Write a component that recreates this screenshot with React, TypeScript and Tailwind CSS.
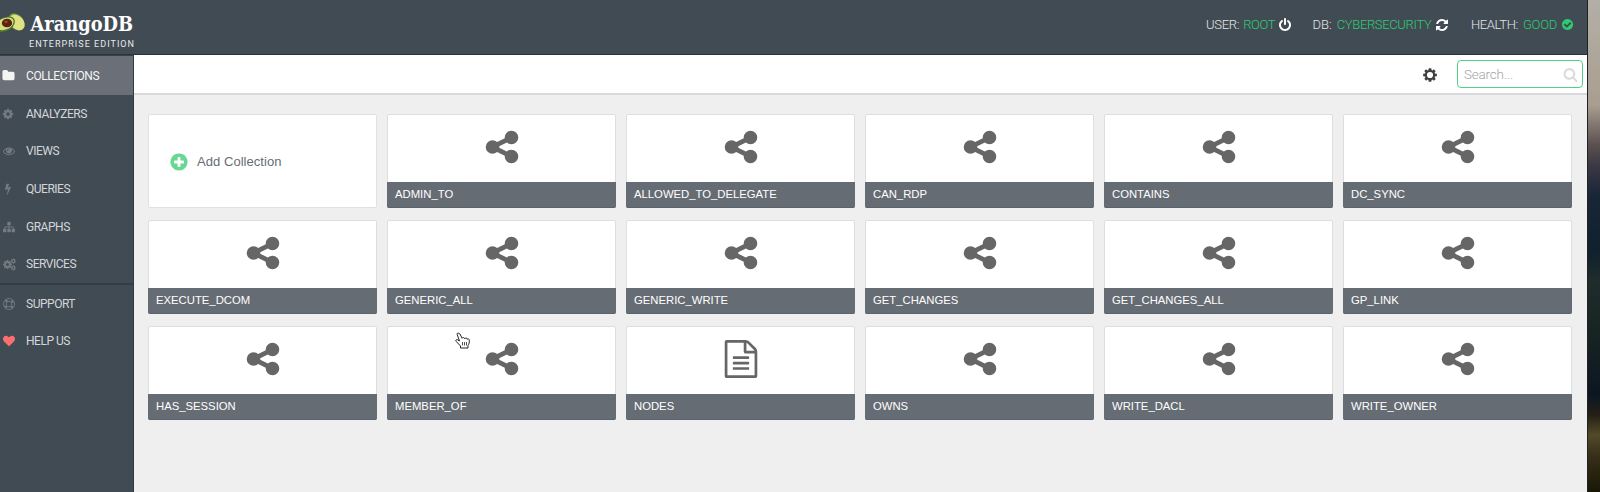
import React from "react";

const COG =
  "M1152 896q0-106-75-181t-181-75-181 75-75 181 75 181 181 75 181-75 75-181zm512-109v222q0 12-8 23t-20 13l-185 28q-19 54-39 91 35 50 107 138 10 12 10 25t-9 23q-27 37-99 108t-94 71q-12 0-26-9l-138-108q-44 23-91 38-16 136-29 186-7 28-36 28h-222q-14 0-24.5-8.5t-11.5-21.5l-28-184q-49-16-90-37l-141 107q-10 9-25 9-14 0-25-11-126-114-165-168-7-10-7-23 0-12 8-23 15-21 51-66.5t54-70.5q-27-50-41-99l-183-27q-13-2-21-12.5t-8-23.5v-222q0-12 8-23t19-13l186-28q14-46 39-92-40-57-107-138-10-12-10-24 0-10 9-23 26-36 98.5-107.5t94.5-71.5q13 0 26 10l138 107q44-23 91-38 16-136 29-186 7-28 36-28h222q14 0 24.5 8.5t11.5 21.5l28 184q49 16 90 37l142-107q9-9 24-9 13 0 25 10 129 119 165 170 7 8 7 22 0 12-8 23-15 21-51 66.5t-54 70.5q26 50 41 98l183 28q13 2 21 12.5t8 23.5z";

const PATHS = {
  cog: COG,
  share:
    "M1344 1024q133 0 226.5 93.5t93.5 226.5-93.5 226.5-226.5 93.5-226.5-93.5-93.5-226.5q0-12 2-34l-360-180q-92 86-218 86-133 0-226.5-93.5t-93.5-226.5 93.5-226.5 226.5-93.5q126 0 218 86l360-180q-2-22-2-34 0-133 93.5-226.5t226.5-93.5 226.5 93.5 93.5 226.5-93.5 226.5-226.5 93.5q-126 0-218-86l-360 180q2 22 2 34t-2 34l360 180q92-86 218-86z",
  file: "M1596 380q28 28 48 76t20 88v1152q0 40-28 68t-68 28h-1344q-40 0-68-28t-28-68v-1600q0-40 28-68t68-28h896q40 0 88 20t76 48zm-444-244v376h376q-10-29-22-41l-313-313q-12-12-41-22zm384 1528v-1024h-416q-40 0-68-28t-28-68v-416h-768v1536h1280zm-1024-864q0-14 9-23t23-9h704q14 0 23 9t9 23v64q0 14-9 23t-23 9h-704q-14 0-23-9t-9-23v-64zm736 224q14 0 23 9t9 23v64q0 14-9 23t-23 9h-704q-14 0-23-9t-9-23v-64q0-14 9-23t23-9h704zm0 256q14 0 23 9t9 23v64q0 14-9 23t-23 9h-704q-14 0-23-9t-9-23v-64q0-14 9-23t23-9h704z",
  plus: "M1344 960v-128q0-26-19-45t-45-19h-256v-256q0-26-19-45t-45-19h-128q-26 0-45 19t-19 45v256h-256q-26 0-45 19t-19 45v128q0 26 19 45t45 19h256v256q0 26 19 45t45 19h128q26 0 45-19t19-45v-256h256q26 0 45-19t19-45zm320-64q0 209-103 385.5t-279.5 279.5-385.5 103-385.5-103-279.5-279.5-103-385.5 103-385.5 279.5-279.5 385.5-103 385.5 103 279.5 279.5 103 385.5z",
  power:
    "M1664 896q0 156-61 298t-164 245-245 164-298 61-298-61-245-164-164-245-61-298q0-182 80.5-343t226.5-270q43-32 95.5-25t83.5 50q32 42 24.5 94.5t-49.5 84.5q-98 74-151.5 181t-53.5 228q0 104 40.5 198.5t109.5 163.5 163.5 109.5 198.5 40.5 198.5-40.5 163.5-109.5 109.5-163.5 40.5-198.5q0-121-53.5-228t-151.5-181q-42-32-49.5-84.5t24.5-94.5q31-43 84-50t95 25q146 109 226.5 270t80.5 343zm-640-768v640q0 52-38 90t-90 38-90-38-38-90v-640q0-52 38-90t90-38 90 38 38 90z",
  refresh:
    "M1639 1056q0 5-1 7-64 268-268 434.5t-478 166.5q-146 0-282.5-55t-243.5-157l-129 129q-19 19-45 19t-45-19-19-45v-448q0-26 19-45t45-19h448q26 0 45 19t19 45-19 45l-137 137q71 66 161 102t187 36q134 0 250-65t186-179q11-17 53-117 8-23 30-23h192q13 0 22.5 9.5t9.5 22.5zm25-800v448q0 26-19 45t-45 19h-448q-26 0-45-19t-19-45 19-45l138-138q-148-137-349-137-134 0-250 65t-186 179q-11 17-53 117-8 23-30 23h-199q-13 0-22.5-9.5t-9.5-22.5v-7q65-268 270-434.5t480-166.5q146 0 284 55.5t245 156.5l130-129q19-19 45-19t45 19 19 45z",
  check:
    "M1412 734q0-28-18-46l-91-90q-19-19-45-19t-45 19l-408 407-226-226q-19-19-45-19t-45 19l-91 90q-18 18-18 46 0 27 18 45l362 362q19 19 45 19 27 0 46-19l543-543q18-18 18-45zm252 162q0 209-103 385.5t-279.5 279.5-385.5 103-385.5-103-279.5-279.5-103-385.5 103-385.5 279.5-279.5 385.5-103 385.5 103 279.5 279.5 103 385.5z",
  search:
    "M1216 832q0-185-131.5-316.5t-316.5-131.5-316.5 131.5-131.5 316.5 131.5 316.5 316.5 131.5 316.5-131.5 131.5-316.5zm512 832q0 52-38 90t-90 38q-54 0-90-38l-343-342q-179 124-399 124-143 0-273.5-55.5t-225-150-150-225-55.5-273.5 55.5-273.5 150-225 225-150 273.5-55.5 273.5 55.5 225 150 150 225 55.5 273.5q0 220-124 399l343 343q37 37 37 90z",
  folder:
    "M1728 608v704q0 92-66 158t-158 66h-1216q-92 0-158-66t-66-158v-960q0-92 66-158t158-66h320q92 0 158 66t66 158v32h672q92 0 158 66t66 158z",
  eye: "M1664 960q-152-236-381-353 61 104 61 225 0 185-131.5 316.5t-316.5 131.5-316.5-131.5-131.5-316.5q0-121 61-225-229 117-381 353 133 205 333.5 326.5t434.5 121.5 434.5-121.5 333.5-326.5zm-720-384q0-20-14-34t-34-14q-125 0-214.5 89.5t-89.5 214.5q0 20 14 34t34 14 34-14 14-34q0-86 61-147t147-61q20 0 34-14t14-34zm848 384q0 34-20 69-140 230-376.5 368.5t-499.5 138.5-499.5-139-376.5-368q-20-35-20-69t20-69q140-229 376.5-368t499.5-139 499.5 139 376.5 368q20 35 20 69z",
  bolt: "M1333 566q18 20 7 44l-540 1157q-13 25-42 25-4 0-14-2-17-5-25.5-19t-4.5-30l197-808-406 101q-4 1-12 1-18 0-31-11-18-15-13-39l201-825q4-14 16-23t28-9h328q19 0 32 12.5t13 29.5q0 8-5 18l-171 463 396-98q8-2 12-2 19 0 34 15z",
  sitemap:
    "M1792 1248v320q0 40-28 68t-68 28h-320q-40 0-68-28t-28-68v-320q0-40 28-68t68-28h96v-192h-512v192h96q40 0 68 28t28 68v320q0 40-28 68t-68 28h-320q-40 0-68-28t-28-68v-320q0-40 28-68t68-28h96v-192h-512v192h96q40 0 68 28t28 68v320q0 40-28 68t-68 28h-320q-40 0-68-28t-28-68v-320q0-40 28-68t68-28h96v-192q0-52 38-90t90-38h512v-192h-96q-40 0-68-28t-28-68v-320q0-40 28-68t68-28h320q40 0 68 28t28 68v320q0 40-28 68t-68 28h-96v192h512q52 0 90 38t38 90v192h96q40 0 68 28t28 68z",
  heart:
    "M896 1664q-26 0-44-18l-624-602q-10-8-27.5-26t-55.5-65.5-68-97.5-53.5-121-23.5-138q0-220 127-344t351-124q62 0 126.5 21.5t120 58 95.5 68.5 76 68q36-36 76-68t95.5-68.5 120-58 126.5-21.5q224 0 351 124t127 344q0 221-229 450l-623 600q-18 18-44 18z",
};

type IconName = keyof typeof PATHS;

function Icon({ name, className }: { name: IconName; className: string }) {
  return (
    <svg viewBox="0 0 1792 1792" fill="currentColor" className={`shrink-0 ${className}`}>
      <path d={PATHS[name]} />
    </svg>
  );
}

function SettingsGear() {
  return (
    <svg viewBox="0 0 1792 1792" fill="currentColor" className="mr-[19.5px] mt-px size-[16px] shrink-0 text-[#404040]">
      <path d={COG} />
      <circle cx="896" cy="896" r="345" fill="#fff" />
    </svg>
  );
}

function Cogs({ className }: { className: string }) {
  return (
    <svg viewBox="0 0 1792 1792" fill="currentColor" className={`shrink-0 ${className}`}>
      <path d={COG} transform="translate(-100 180) scale(0.8)" />
      <path d={COG} transform="translate(1010 20) scale(0.46)" />
      <path d={COG} transform="translate(1010 950) scale(0.46)" />
    </svg>
  );
}

function LifeRing({ className }: { className: string }) {
  return (
    <svg viewBox="0 0 24 24" fill="none" stroke="currentColor" className={`shrink-0 ${className}`}>
      <circle cx="12" cy="12" r="11" strokeWidth="1.8" />
      <circle cx="12" cy="12" r="5.6" strokeWidth="1.8" />
      <circle cx="12" cy="12" r="8.4" strokeWidth="5" strokeDasharray="4.6 8.6" strokeDashoffset="-4.3" />
    </svg>
  );
}

const navItems: { label: string; icon: React.ReactNode }[] = [
  { label: "ANALYZERS", icon: <Icon name="cog" className="-ml-px size-[12px]" /> },
  { label: "VIEWS", icon: <Icon name="eye" className="size-[12px]" /> },
  { label: "QUERIES", icon: <Icon name="bolt" className="-ml-px size-[12px]" /> },
  { label: "GRAPHS", icon: <Icon name="sitemap" className="size-[12px]" /> },
  { label: "SERVICES", icon: <Cogs className="size-[13px]" /> },
];

const collections = [
  "ADMIN_TO",
  "ALLOWED_TO_DELEGATE",
  "CAN_RDP",
  "CONTAINS",
  "DC_SYNC",
  "EXECUTE_DCOM",
  "GENERIC_ALL",
  "GENERIC_WRITE",
  "GET_CHANGES",
  "GET_CHANGES_ALL",
  "GP_LINK",
  "HAS_SESSION",
  "MEMBER_OF",
  "NODES",
  "OWNS",
  "WRITE_DACL",
  "WRITE_OWNER",
];

function NavRow({ label, icon }: { label: string; icon: React.ReactNode }) {
  return (
    <a className="flex h-[37.6px] items-center pl-[3px] text-[#d3d6d8]">
      <span className="flex w-[23px] items-center text-[#737a80]">{icon}</span>
      <span>{label}</span>
    </a>
  );
}

function Logo() {
  return (
    <svg viewBox="0 0 134 54" className="h-[54px] w-[134px] shrink-0 overflow-visible">
      <ellipse cx="16.500" cy="22" rx="9.500" ry="7" transform="rotate(48 16.500 22)" fill="#8fae45" />
      <ellipse cx="17.200" cy="22.500" rx="8.600" ry="6.300" transform="rotate(48 17.200 22.500)" fill="#dfe283" />
      <path d="M-2 21C1 17.500 9 15 13 17.500c4 3.500 1 10-4 12.500-4 2-8 2.500-11 1.500z" fill="#4d7531" />
      <path d="M-2 21.500C1 18.500 8.500 16 12 18.500c3.500 3 .5 8-4 10.200-3.500 1.600-7 1.900-10 .8z" fill="#d8de79" />
      <ellipse cx="7" cy="23" rx="5.200" ry="4.300" fill="#5c2410" />
      <ellipse cx="6" cy="21.800" rx="1.800" ry="1.200" fill="#8e4b2b" />
      <text
        x="30.5"
        y="30.7"
        textLength="102.5"
        lengthAdjust="spacingAndGlyphs"
        fill="#fff"
        fontSize="21"
        fontWeight="700"
        fontFamily="DejaVu Serif, serif"
      >
        ArangoDB
      </text>
      <text x="29" y="46.500" textLength="105" fill="#e8eaeb" fontSize="9" fontFamily="Roboto, sans-serif">
        ENTERPRISE EDITION
      </text>
    </svg>
  );
}

function Hand() {
  return (
    <svg viewBox="0 0 15 17" className="absolute left-[67px] top-[5px] h-[17px] w-[15px]">
      <path
        d="M4 1.500c-1-1-2.300-.2-1.800 1L4.500 9 2.300 7.700C1 7.200.3 8.500 1.300 9.500L5.500 14v2h7.500v-2.500c1-1.500 1.500-3 1.300-5-.1-2-1.800-2.200-2-1.200 0-1.300-2-1.800-2.500-.5C9.500 5.500 7.500 5 7.100 6.300L5 2z"
        fill="#fff"
        stroke="#222"
        strokeWidth="1"
      />
      <path d="M7.500 10v3.500M9.500 10v3.500M11.500 10v3.500" stroke="#222" strokeWidth=".8" />
    </svg>
  );
}

export default function App() {
  return (
    <div className="flex h-[492px] w-[1600px] overflow-hidden bg-[#efefef] font-[Roboto,sans-serif]">
      <div className="flex w-[1587px] shrink-0 flex-col">
        <header className="flex h-[55px] shrink-0 items-start justify-between border-b border-[#283440] bg-[#414b54]">
          <Logo />
          <div className="flex h-[49px] items-center pr-[13px] text-[13px] font-light text-[#e3e5e6]">
            <div className="flex items-center">
              <span className="tracking-[-0.3px]">USER:</span>
              <span className="ml-[4px] tracking-[-0.4px] text-[#2ecc71]">ROOT</span>
              <Icon name="power" className="ml-[3px] size-[14px] text-white" />
            </div>
            <div className="ml-[20.5px] flex items-center">
              <span>DB:</span>
              <span className="ml-[5px] tracking-[-0.35px] text-[#2ecc71]">CYBERSECURITY</span>
              <Icon name="refresh" className="ml-[4px] size-[14px] text-white" />
            </div>
            <div className="ml-[21.5px] flex items-center">
              <span className="tracking-[-0.35px]">HEALTH:</span>
              <span className="ml-[5px] tracking-[-0.25px] text-[#2ecc71]">GOOD</span>
              <Icon name="check" className="ml-[4px] size-[13px] text-[#2ecc71]" />
            </div>
          </div>
        </header>
        <div className="flex flex-1">
          <nav className="flex w-[134px] shrink-0 flex-col border-r border-[#303b46] bg-[#414b54] text-[12px] tracking-[-0.48px]">
            <a className="flex h-[40px] items-center border-t border-[#3b4049] bg-[#6a6f78] pl-[2px] text-[#f4f4f5]">
              <span className="flex w-[24px] items-center">
                <Icon name="folder" className="size-[13px]" />
              </span>
              <span className="tracking-[-0.42px]">COLLECTIONS</span>
            </a>
            {navItems.map((item) => (
              <NavRow key={item.label} label={item.label} icon={item.icon} />
            ))}
            <div className="h-[2px] bg-[#343c45]" />
            <NavRow label="SUPPORT" icon={<LifeRing className="size-[12px]" />} />
            <NavRow label="HELP US" icon={<Icon name="heart" className="size-[12px] text-[#fd6f6f]" />} />
          </nav>
          <main className="flex flex-1 flex-col">
            <div className="flex h-[40px] items-center justify-end border-b-2 border-[#d9d9d9] bg-white pr-[4px]">
              <SettingsGear />
              <div className="flex h-[28px] w-[126px] items-center justify-between rounded-[4px] border border-[#4fd084] pl-[6px] pr-[4px] text-[13.5px] font-light text-[#a5a5a5]">
                <span className="tracking-[-0.2px]">Search...</span>
                <Icon name="search" className="size-[15px] text-[#dcdcdc]" />
              </div>
            </div>
            <div className="grid grid-cols-[repeat(6,229px)] gap-x-[10px] gap-y-[12px] pl-[14px] pt-[19px] font-['Liberation_Sans',sans-serif]">
              <div className="flex h-[94px] items-center rounded-[2px] border border-[#e1e1e1] bg-white pl-[20px] pt-[2px]">
                <Icon name="plus" className="size-[20px] text-[#68d794]" />
                <span className="ml-[8px] text-[13px] tracking-[0.05px] text-[#666c74]">Add Collection</span>
              </div>
              {collections.map((name) => (
                <div key={name} className="relative flex h-[94px] flex-col rounded-[2px] border border-[#dcdfe0] bg-white">
                  <div className="flex flex-1 items-center justify-center pb-[3px]">
                    <Icon name={name === "NODES" ? "file" : "share"} className="size-[38px] text-[#666]" />
                  </div>
                  <div className="-mx-px -mb-px flex h-[26px] items-center rounded-b-[2px] border-b border-[#59636c] bg-[#666c74] pl-[8px] text-[11.3px] text-white">
                    {name}
                  </div>
                  {name === "MEMBER_OF" && <Hand />}
                </div>
              ))}
            </div>
          </main>
        </div>
      </div>
      <div className="w-[13px] shrink-0 border-l border-[#222] bg-[linear-gradient(180deg,#b3afa6_0px,#a99e90_105px,#5b504f_145px,#3c3845_165px,#192636_195px,#10202d_250px,#1e2c2c_280px,#172522_330px,#0c1623_395px,#242016_415px,#534a29_435px,#383018_455px,#181706_492px)]" />
    </div>
  );
}
